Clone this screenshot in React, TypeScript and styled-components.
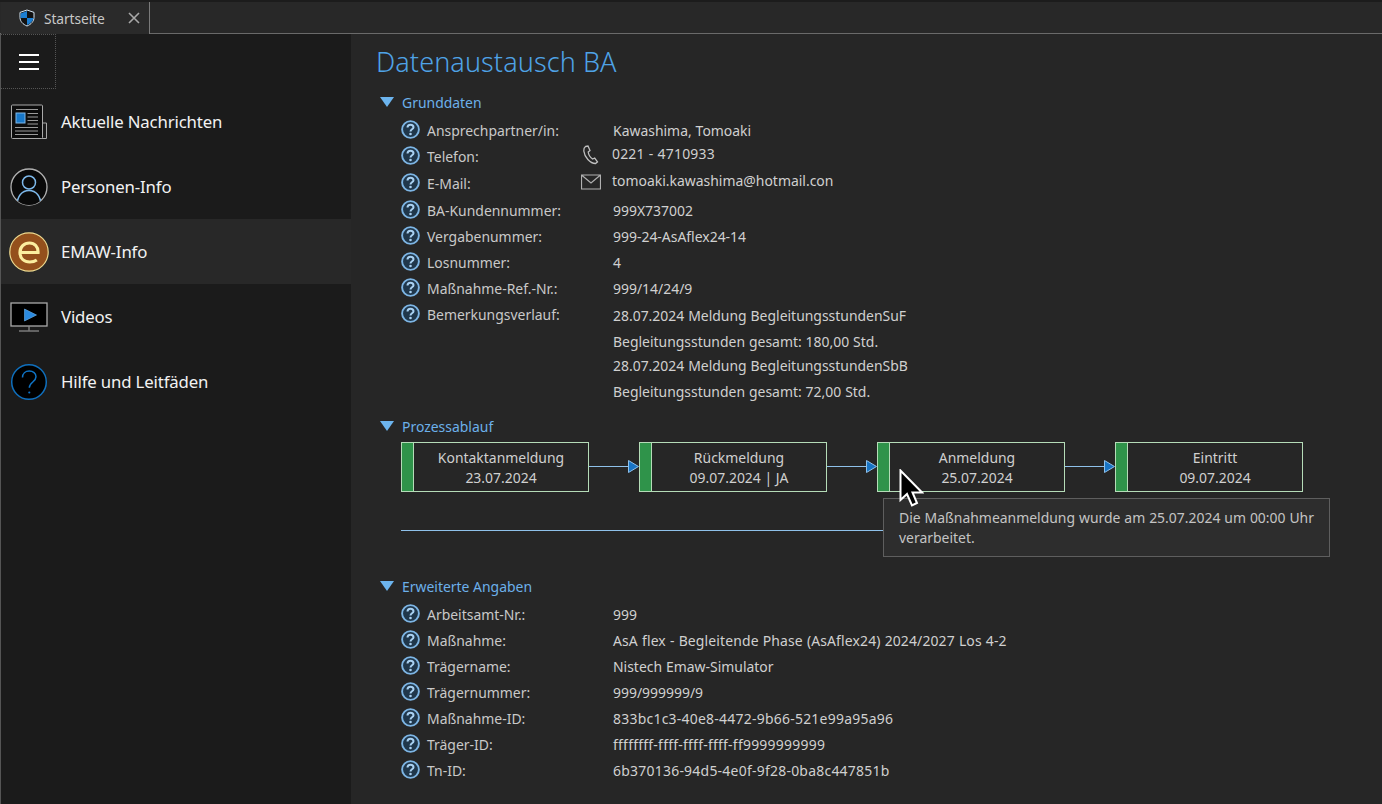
import React from "react";
import styled, { createGlobalStyle } from "styled-components";

const Global = createGlobalStyle`
  html, body { margin: 0; padding: 0; height: 100%; background: #262626; }
  body { font-family: "Noto Sans", "Open Sans", sans-serif; overflow: hidden; }
  * { box-sizing: border-box; }
`;

const Shell = styled.div`
  width: 1382px; height: 804px; display: flex; flex-direction: column;
  background: #262626; position: relative; overflow: hidden;
`;
const TabBar = styled.div`
  height: 34px; flex: none; display: flex; background: #282828;
  border-top: 2px solid #1c1c1c; border-bottom: 1px solid #6a6a6a; padding-left: 1px;
`;
const Tab = styled.div`
  width: 149px; height: 32px; display: flex; align-items: center; padding-left: 17px;
  background: #2a2a2a; border-right: 1px solid #7a7a7a; margin-bottom: -1px; color: #c8c8c8;
  font-size: 13.8px; letter-spacing: -0.1px;
`;
const TabLabel = styled.span` margin-left: 8px; width: 84px; `;
const Body = styled.div` flex: 1; display: flex; min-height: 0; `;
const Sidebar = styled.nav`
  width: 351px; flex: none; background: #1b1b1b; border-left: 1px solid #555;
  display: flex; flex-direction: column;
`;
const Burger = styled.div`
  width: 55px; height: 55px; display: flex; flex-direction: column; justify-content: center;
  align-items: center; gap: 5px; border: 1px dotted #555; border-left: none; padding-left: 1px;
`;
const BurgerBar = styled.span` width: 20px; height: 2px; background: #fff; `;
const NavItem = styled.div<{ $active?: boolean }>`
  height: 65px; display: flex; align-items: center; padding-left: 8px; gap: 12px;
  background: ${(p) => (p.$active ? "#282828" : "transparent")};
  color: #f2f2f2; font-size: 16.8px; letter-spacing: -0.15px;
`;
const NavText = styled.span` padding-bottom: 1px; `;
const NavIcon = styled.span` width: 40px; height: 40px; display: flex; align-items: center; justify-content: center; flex: none; `;
const Main = styled.main`
  flex: 1; position: relative; padding: 0 0 0 25px; display: flex; flex-direction: column;
`;
const Title = styled.h1`
  margin: 9px 0 0; height: 38px; line-height: 38px; font-weight: 300; font-size: 27px;
  color: #4fa3e6; letter-spacing: 0.1px;
`;
const SectionHead = styled.div<{ $top: number }>`
  margin-top: ${(p) => p.$top}px; height: 20px; display: flex; align-items: center; gap: 8px;
  padding-left: 4px; color: #6cb0ea; font-size: 13.95px;
`;
const Fields = styled.div<{ $top: number }>`
  margin-top: ${(p) => p.$top}px; padding-left: 25px; display: flex; flex-direction: column;
`;
const Row = styled.div<{ $h?: number }>`
  height: ${(p) => p.$h ?? 26}px; display: flex; align-items: flex-start; color: #c9c9c9;
  font-size: 13.95px; line-height: 22px; word-spacing: 0.3px;
`;
const HelpWrap = styled.span` width: 19px; height: 19px; flex: none; margin-left: -0.5px; `;
const Label = styled.span` width: 186px; margin-left: 7.5px; flex: none; `;
const Value = styled.span<{ $track?: number }>`
  color: #d0d0d0; white-space: nowrap; letter-spacing: ${(p) => p.$track ?? 0}px;
`;
const ContactRow = styled(Row)` position: relative; `;
const ContactIcon = styled.span`
  position: absolute; left: 179px; top: -2px; width: 22px; height: 22px;
  display: flex; align-items: center; justify-content: center;
`;
const ContactValue = styled(Value)` margin-left: -1px; margin-top: -3px; `;
const Notes = styled.div` display: flex; flex-direction: column; padding-top: 1px; `;
const Note = styled.div<{ $h: number }>` height: ${(p) => p.$h}px; line-height: 22px; color: #d0d0d0; white-space: nowrap; `;
const Flow = styled.div` margin: 6px 0 0 25px; display: flex; height: 50px; `;
const StepBox = styled.div`
  width: 188px; height: 50px; flex: none; display: flex; border: 1px solid #b5dcb8; 
`;
const StepBar = styled.div` width: 11px; background: #2f934a; border-right: 1px solid #b5dcb8; box-sizing: content-box; `;
const StepText = styled.div`
  flex: 1; display: flex; flex-direction: column; align-items: center; justify-content: center;
  color: #d0d0d0; font-size: 13.95px; line-height: 20px; white-space: nowrap; padding-top: 2px;
`;
const Connector = styled.svg` width: 50px; height: 50px; flex: none; `;
const LongLine = styled.div` margin: 38px 0 0 25px; width: 482px; height: 1px; background: #8fc1ea; `;
const Tip = styled.div`
  position: absolute; left: 532px; top: 464px; width: 447px; height: 59px; padding: 9px 15px;
  background: #2d2d2d; border: 1px solid #5e5e5e; color: #c4c4c4; font-size: 13.95px; line-height: 20px; word-spacing: 0.3px;
`;
const Cursor = styled.svg` position: absolute; left: 548px; top: 435px; width: 25px; height: 38px; `;

const Help = () => (
  <HelpWrap>
    <svg width="19" height="19" viewBox="0 0 19 19">
      <circle cx="9.500" cy="9.500" r="8.400" fill="#20374b" stroke="#7db5e4" strokeWidth="1.900" />
      <path d="M6.500 7.500c0-1.700 1.300-2.800 3-2.800s3 1.100 3 2.500c0 2.200-3 2-3 4.300" fill="none" stroke="#a9d1f2" strokeWidth="2" />
      <circle cx="9.500" cy="14" r="1.300" fill="#a9d1f2" />
    </svg>
  </HelpWrap>
);
const Tri = () => (
  <svg width="14" height="10" viewBox="0 0 14 10"><path d="M0 0h14L7 10z" fill="#6cb4ee" /></svg>
);
const Field = ({ label, value, h, track }: { label: string; value: string; h?: number; track?: number }) => (
  <Row $h={h}><Help /><Label>{label}</Label><Value $track={track}>{value}</Value></Row>
);
const Step = ({ a, b }: { a: string; b: string }) => (
  <StepBox><StepBar /><StepText><span>{a}</span><span>{b}</span></StepText></StepBox>
);
const Arrow = () => (
  <Connector viewBox="0 0 50 50">
    <path d="M0 24.500h39" stroke="#8fc1ea" strokeWidth="1" />
    <path d="M39.500 18.500L49.500 24.500L39.500 30.500z" fill="#1874c4" stroke="#8fc1ea" strokeWidth="1" />
  </Connector>
);

export default function App() {
  return (
    <Shell>
      <Global />
      <TabBar>
        <Tab>
          <svg width="18" height="18" viewBox="0 0 18 18">
            <path d="M9 1l7 2.400v5c0 4-3 7-7 8.600-4-1.600-7-4.600-7-8.600v-5z" fill="#111" stroke="#d5e6f5" strokeWidth="1" />
            <path d="M9 2v7H2.600v-.6-3.900zM9 9h6.400c-.3 3-2.800 5.600-6.400 7z" fill="#1b7ed2" />
          </svg>
          <TabLabel>Startseite</TabLabel>
          <svg width="12" height="12" viewBox="0 0 12 12"><path d="M1 1l10 10M11 1L1 11" stroke="#a8a8a8" strokeWidth="1.600" /></svg>
        </Tab>
      </TabBar>
      <Body>
        <Sidebar>
          <Burger><BurgerBar /><BurgerBar /><BurgerBar /></Burger>
          <NavItem>
            <NavIcon>
              <svg width="38" height="36" viewBox="0 0 38 36" fill="none">
                <path d="M31 19h5.500v15.500H30" stroke="#a9a9a9" strokeWidth="1" />
                <rect x="1.500" y="1" width="31" height="33.500" rx="1" fill="#0c0c0c" stroke="#a9a9a9" />
                <rect x="6" y="9" width="9" height="10" fill="#1878c9" stroke="#7fb6e6" />
                <path d="M6 5.500h22M17.500 9.500h10.500M17.500 13h10.500M17.500 16.500h10.500M17.500 20h10.500M5 23.500h23M5 27h23M5 30.500h23" stroke="#9a9a9a" strokeWidth="1" />
              </svg>
            </NavIcon>
            <NavText>Aktuelle Nachrichten</NavText>
          </NavItem>
          <NavItem>
            <NavIcon>
              <svg width="38" height="38" viewBox="0 0 38 38" fill="#0a0a0a">
                <defs><clipPath id="pc"><circle cx="19" cy="19" r="18" /></clipPath></defs>
                <circle cx="19" cy="19" r="18" stroke="#b0b0b0" strokeWidth="1.300" />
                <g clipPath="url(#pc)" stroke="#7db8ea" strokeWidth="1.500">
                  <circle cx="19" cy="14.500" r="6.500" />
                  <path d="M7 38c0-10 5-15.500 12-15.500S31 28 31 38" />
                </g>
              </svg>
            </NavIcon>
            <NavText>Personen-Info</NavText>
          </NavItem>
          <NavItem $active>
            <NavIcon>
              <svg width="40" height="40" viewBox="0 0 40 40">
                <circle cx="20" cy="20" r="19.200" fill="#94501c" stroke="#ecd98f" strokeWidth="1.200" />
                <path d="M10.500 20.500h18.500c.3-6-3.500-9.500-8.500-9.500-5.500 0-9.500 4-9.500 9.500 0 5.800 4 9.500 9.800 9.500 2.800 0 5-.6 7-2" fill="none" stroke="#fbee9f" strokeWidth="3.200" />
              </svg>
            </NavIcon>
            <NavText>EMAW-Info</NavText>
          </NavItem>
          <NavItem>
            <NavIcon>
              <svg width="38" height="30" viewBox="0 0 38 30">
                <rect x="1" y="1" width="36" height="23" fill="#000" stroke="#a9a9a9" strokeWidth="1.300" />
                <path d="M14.500 7l12 6-12 6z" fill="#2a8ae0" stroke="#6fb3ec" strokeWidth=".6" />
                <path d="M19 24.500v4M9 29h20" stroke="#a9a9a9" strokeWidth="1" />
              </svg>
            </NavIcon>
            <NavText>Videos</NavText>
          </NavItem>
          <NavItem>
            <NavIcon>
              <svg width="38" height="38" viewBox="0 0 38 38">
                <circle cx="19" cy="19" r="17.300" fill="#000" stroke="#0f6fbd" strokeWidth="1.500" />
                <path d="M12.500 14.500c0-4 3-6.500 6.800-6.500 3.900 0 6.700 2.500 6.700 5.800 0 5.200-6.700 5.200-6.700 11" fill="none" stroke="#0f74c6" strokeWidth="1.500" />
                <circle cx="19.300" cy="29.500" r="1.100" fill="#0f74c6" />
              </svg>
            </NavIcon>
            <NavText>Hilfe und Leitfäden</NavText>
          </NavItem>
        </Sidebar>
        <Main>
          <Title>Datenaustausch BA</Title>
          <SectionHead $top={11}><Tri />Grunddaten</SectionHead>
          <Fields $top={8}>
            <Field label="Ansprechpartner/in:" value="Kawashima, Tomoaki" />
            <ContactRow $h={27}>
              <Help /><Label>Telefon:</Label>
              <ContactIcon>
                <svg width="18" height="20" viewBox="0 0 18 20" fill="none">
                  <path d="M3.500 1.500L6 1l2 4.500-1.800 1.500c.4 3 2 5.500 4.400 7l2.100-1 2.800 3.800-2 1.700C8 18.500 2.500 12 1.800 6c-.2-2 .4-3.600 1.700-4.500z" stroke="#c0c0c0" strokeWidth="1.300" />
                </svg>
              </ContactIcon>
              <ContactValue $track={0.2}>0221 - 4710933</ContactValue>
            </ContactRow>
            <ContactRow $h={27}>
              <Help /><Label>E-Mail:</Label>
              <ContactIcon>
                <svg width="20" height="16" viewBox="0 0 20 16" fill="none">
                  <path d="M.5 1h19v14H.5zM.8 1.300L10 9l9.200-7.700" stroke="#b0b0b0" strokeWidth="1.200" />
                </svg>
              </ContactIcon>
              <ContactValue>tomoaki.kawashima@hotmail.con</ContactValue>
            </ContactRow>
            <Field label="BA-Kundennummer:" value="999X737002" />
            <Field label="Vergabenummer:" value="999-24-AsAflex24-14" />
            <Field label="Losnummer:" value="4" />
            <Field label="Maßnahme-Ref.-Nr.:" value="999/14/24/9" />
            <Row $h={99}>
              <Help /><Label>Bemerkungsverlauf:</Label>
              <Notes>
                <Note $h={26}>28.07.2024 Meldung BegleitungsstundenSuF</Note>
                <Note $h={24}>Begleitungsstunden gesamt: 180,00 Std.</Note>
                <Note $h={26}>28.07.2024 Meldung BegleitungsstundenSbB</Note>
                <Note $h={20}>Begleitungsstunden gesamt: 72,00 Std.</Note>
              </Notes>
            </Row>
          </Fields>
          <SectionHead $top={13}><Tri />Prozessablauf</SectionHead>
          <Flow>
            <Step a="Kontaktanmeldung" b="23.07.2024" />
            <Arrow />
            <Step a="Rückmeldung" b="09.07.2024 | JA" />
            <Arrow />
            <Step a="Anmeldung" b="25.07.2024" />
            <Arrow />
            <Step a="Eintritt" b="09.07.2024" />
          </Flow>
          <LongLine />
          <SectionHead $top={45}><Tri />Erweiterte Angaben</SectionHead>
          <Fields $top={8}>
            <Field label="Arbeitsamt-Nr.:" value="999" />
            <Field label="Maßnahme:" value="AsA flex - Begleitende Phase (AsAflex24) 2024/2027 Los 4-2" track={0.14} />
            <Field label="Trägername:" value="Nistech Emaw-Simulator" />
            <Field label="Trägernummer:" value="999/999999/9" />
            <Field label="Maßnahme-ID:" value="833bc1c3-40e8-4472-9b66-521e99a95a96" track={0.25} />
            <Field label="Träger-ID:" value="ffffffff-ffff-ffff-ffff-ff9999999999" track={0.25} />
            <Field label="Tn-ID:" value="6b370136-94d5-4e0f-9f28-0ba8c447851b" track={0.25} />
          </Fields>
          <Tip>Die Maßnahmeanmeldung wurde am 25.07.2024 um 00:00 Uhr verarbeitet.</Tip>
          <Cursor viewBox="0 0 25 38">
            <path d="M1.500 1.500V31L8 25l5 11.500 5-2.500-4.500-10.500H23z" fill="#000" stroke="#fff" strokeWidth="2" />
          </Cursor>
        </Main>
      </Body>
    </Shell>
  );
}
